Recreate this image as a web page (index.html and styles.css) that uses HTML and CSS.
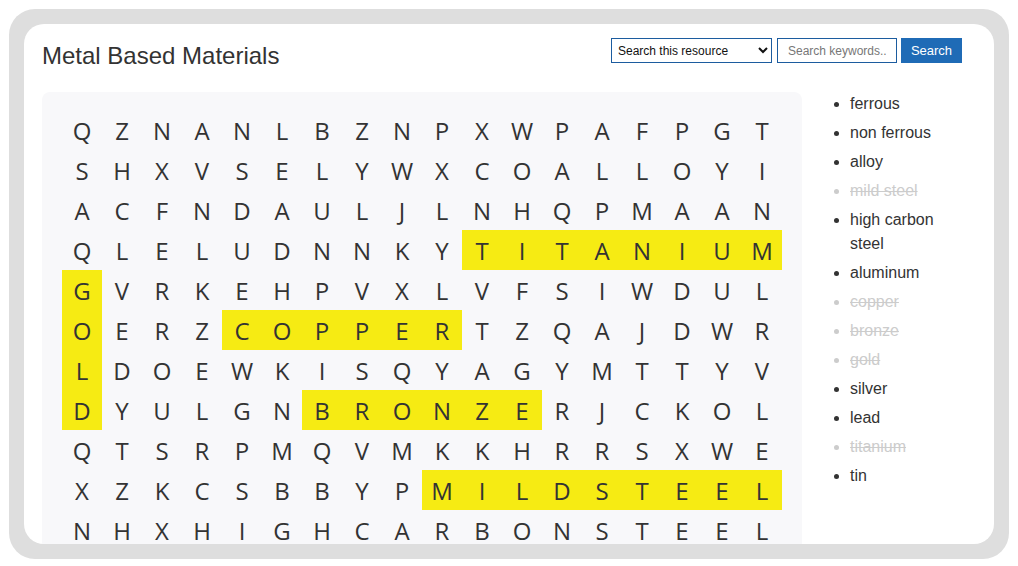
FILE: index.html
```html
<!DOCTYPE html>
<html lang="en">
<head>
    <meta charset="UTF-8">
    <meta name="viewport" content="width=device-width, initial-scale=1.0">
    <title>Metal Based Materials</title>

    <link rel="stylesheet" href="styles.css">
</head>
<body>

    <div class="Frame">
        <div class="Card">

            <div class="Card__head">
                <h1>Metal Based Materials</h1>

                <form class="Search" action="#">
                    <select name="scope">
                        <option>Search this resource</option>
                    </select>
                    <input type="text" name="q" placeholder="Search keywords..">
                    <button>Search</button>
                </form>
            </div>

            <div class="Card__body">
                <!-- сетка букв -->
                <div class="Puzzle">
                    <div class="Puzzle__grid" id="GRID"></div>
                </div>

                <ul class="Words">
                    <li>ferrous</li>
                    <li>non ferrous</li>
                    <li>alloy</li>
                    <li class="found">mild steel</li>
                    <li>high carbon steel</li>
                    <li>aluminum</li>
                    <li class="found">copper</li>
                    <li class="found">bronze</li>
                    <li class="found">gold</li>
                    <li>silver</li>
                    <li>lead</li>
                    <li class="found">titanium</li>
                    <li>tin</li>
                </ul>
            </div>

        </div>
    </div>

    <script type="text/javascript">
        // Строки сетки
        let rows = [
                'QZNANLBZNPXWPAFPGT',
                'SHXVSELYWXCOALLOYI',
                'ACFNDAULJLNHQPMAAN',
                'QLELUDNNKYTITANIUM',
                'GVRKEHPVXLVFSIWDUL',
                'OERZCOPPERTZQAJDWR',
                'LDOEWKISQYAGYMTTYV',
                'DYULGNBRONZERJCKOL',
                'QTSRPMQVMKKHRRSXWE',
                'XZKCSBBYPMILDSTEEL',
                'NHXHIGHCARBONSTEEL'
            ],
            // найденные слова: [строка, от, до] (включительно)
            found = [
                [3, 10, 17], [4, 0, 0], [5, 0, 0], [6, 0, 0], [7, 0, 0],
                [5, 4, 9], [7, 6, 11], [9, 9, 17]
            ],
            grid = document.getElementById('GRID')

        function isHit (r, c) {
            return found.some(function (f) {
                return f[0] === r && c >= f[1] && c <= f[2]
            })
        }

        rows.forEach(function (row, r) {
            row.split('').forEach(function (ch, c) {
                let cell = document.createElement('span')
                cell.className = 'Puzzle__cell' + (isHit(r, c) ? ' hit' : '')
                cell.innerText = ch
                grid.appendChild(cell)
            })
        })
    </script>
</body>
</html>
```

FILE: styles.css
```css
* {
    box-sizing: border-box;
}

body {
    margin: 0;
    padding: 9px;
    font-family: 'Liberation Sans', Arial, sans-serif;
    color: #333;
    background: #fff;
}

.Frame {
    width: 1000px;
    height: 550px;
    padding: 15px;
    background: #dedede;
    border-radius: 26px;
}

.Card {
    height: 100%;
    padding: 14px 32px 0 18px;
    background: #fff;
    border-radius: 20px;
    overflow: hidden;
}

.Card__head {
    display: flex;
    justify-content: space-between;
    align-items: flex-start;
}

.Card__head h1 {
    margin: 4px 0 0;
    font-size: 24px;
    font-weight: normal;
    line-height: 28px;
    color: #333;
}

.Search {
    display: flex;
    height: 25px;
}

.Search select,
.Search input,
.Search button {
    height: 25px;
    font-family: 'Liberation Sans', Arial, sans-serif;
    font-size: 12px;
    border-radius: 0;
}

.Search select {
    width: 161px;
    padding: 0 2px;
    border: 1px solid #1c5c9f;
    background: #fff;
    color: #111;
}

.Search input {
    width: 120px;
    margin-left: 5px;
    padding: 0 10px;
    border: 1px solid #1c5c9f;
    outline: none;
}

.Search input::placeholder {
    color: #777;
}

.Search button {
    width: 61px;
    margin-left: 4px;
    border: none;
    background: #1f6bb6;
    color: #fff;
    font-size: 13px;
}

.Card__body {
    display: flex;
    margin-top: 22px;
}

.Puzzle {
    width: 760px;
    flex-shrink: 0;
    padding: 18px 20px 40px;
    background: #f8f8fa;
    border-radius: 8px;
}

.Puzzle__grid {
    display: grid;
    grid-template-columns: repeat(18, 40px);
    grid-auto-rows: 40px;
}

.Puzzle__cell {
    display: flex;
    align-items: center;
    justify-content: center;
    font-family: 'Open Sans', sans-serif;
    font-size: 24px;
    color: #333;
}

.Puzzle__cell.hit {
    background: #f6eb13;
}

.Words {
    width: 159px;
    margin: 0;
    padding: 0 0 0 48px;
    font-size: 16px;
    line-height: 24px;
}

.Words li {
    margin-bottom: 5px;
}

.Words li.found {
    color: #ccc;
    text-decoration: line-through;
}
```
